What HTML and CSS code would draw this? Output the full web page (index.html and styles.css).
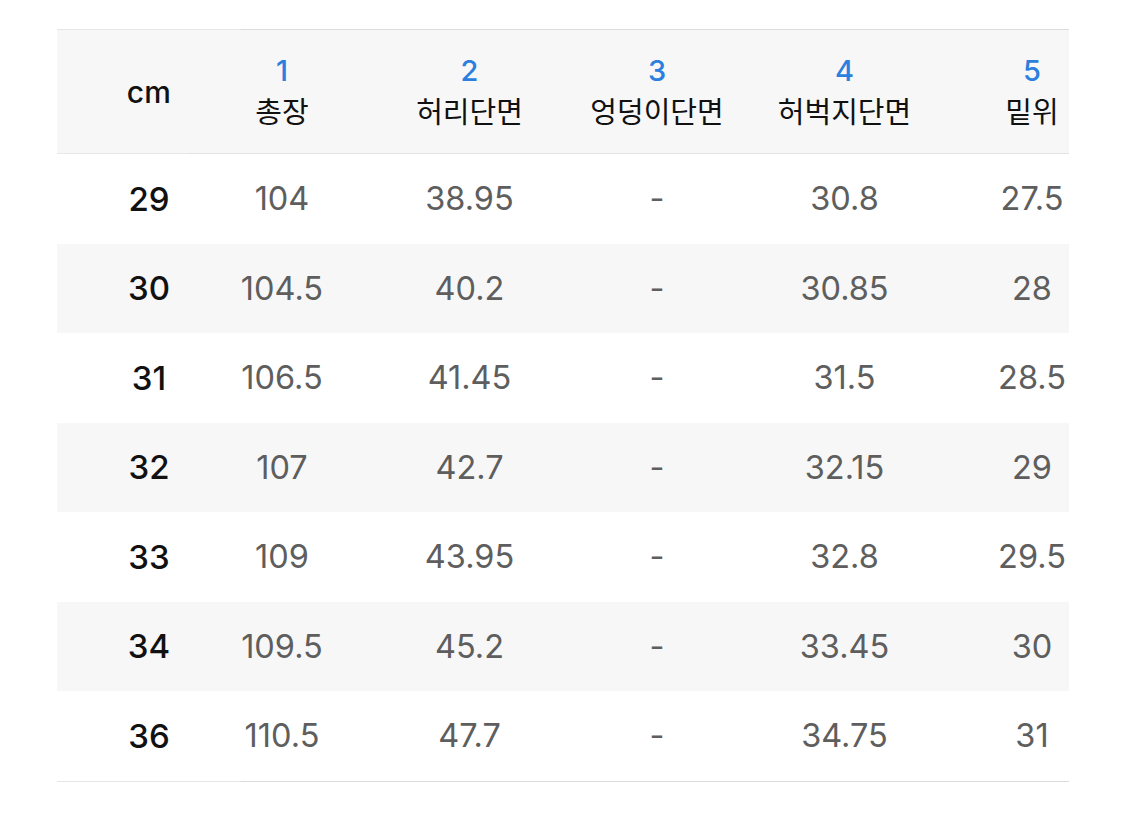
FILE: index.html
```html
<!DOCTYPE html>
<html lang="ko">
<head>
<meta charset="utf-8">
<link rel="stylesheet" href="styles.css">
</head>
<body>
<div class="table">
  <div class="fixed">
    <div class="head-cell"><span class="unit">cm</span></div>
    <div class="size-cell">29</div>
    <div class="size-cell alt">30</div>
    <div class="size-cell">31</div>
    <div class="size-cell alt">32</div>
    <div class="size-cell">33</div>
    <div class="size-cell alt">34</div>
    <div class="size-cell">36</div>
  </div>
  <div class="scroll">
    <div class="grid">
      <div class="head-row">
        <div class="head-cell"><span class="num">1</span><span class="label">총장</span></div>
        <div class="head-cell"><span class="num">2</span><span class="label">허리단면</span></div>
        <div class="head-cell"><span class="num">3</span><span class="label">엉덩이단면</span></div>
        <div class="head-cell"><span class="num">4</span><span class="label">허벅지단면</span></div>
        <div class="head-cell"><span class="num">5</span><span class="label">밑위</span></div>
      </div>
      <div class="row"><div class="cell">104</div><div class="cell">38.95</div><div class="cell">-</div><div class="cell">30.8</div><div class="cell">27.5</div></div>
      <div class="row alt"><div class="cell">104.5</div><div class="cell">40.2</div><div class="cell">-</div><div class="cell">30.85</div><div class="cell">28</div></div>
      <div class="row"><div class="cell">106.5</div><div class="cell">41.45</div><div class="cell">-</div><div class="cell">31.5</div><div class="cell">28.5</div></div>
      <div class="row alt"><div class="cell">107</div><div class="cell">42.7</div><div class="cell">-</div><div class="cell">32.15</div><div class="cell">29</div></div>
      <div class="row"><div class="cell">109</div><div class="cell">43.95</div><div class="cell">-</div><div class="cell">32.8</div><div class="cell">29.5</div></div>
      <div class="row alt"><div class="cell">109.5</div><div class="cell">45.2</div><div class="cell">-</div><div class="cell">33.45</div><div class="cell">30</div></div>
      <div class="row"><div class="cell">110.5</div><div class="cell">47.7</div><div class="cell">-</div><div class="cell">34.75</div><div class="cell">31</div></div>
    </div>
  </div>
</div>
</body>
</html>
```

FILE: styles.css
```css
html, body {
  margin: 0;
  padding: 0;
  background: #ffffff;
}

body {
  padding: 29px 0 0 57px;
  font-family: Inter, "Noto Sans CJK KR", sans-serif;
}

.table {
  width: 1012px;
  display: flex;
  overflow: hidden;
}

.fixed {
  flex: none;
  width: 184px;
  border-top: 1.5px solid #e6e6e6;
  border-bottom: 1.5px solid #e6e6e6;
}

.scroll {
  flex: 1;
  min-width: 0;
  border-top: 1.5px solid #dcdcdc;
  border-bottom: 1.5px solid #dcdcdc;
}

.grid {
  margin-left: -52.75px;
  width: 937.5px;
}

.head-row,
.row {
  display: grid;
  grid-template-columns: repeat(5, 187.5px);
}

.head-cell {
  height: 123px;
  background: #f7f7f7;
  border-bottom: 1.5px solid #e8e8e8;
  display: flex;
  flex-direction: column;
  align-items: center;
  justify-content: center;
  color: #111111;
  font-size: 29px;
  line-height: 42px;
}

.head-row .head-cell {
  border-bottom-color: #e3e3e3;
}

.unit {
  font-size: 30px;
  font-weight: 500;
  letter-spacing: 0.3px;
}

.num {
  color: #2b7fde;
  font-size: 29px;
  font-weight: 500;
}

.label {
  font-weight: 400;
}

.size-cell,
.cell {
  height: 89.5px;
  display: flex;
  align-items: center;
  justify-content: center;
}

.size-cell {
  color: #111111;
  font-size: 33px;
  font-weight: 500;
}

.cell {
  color: #5e5e5e;
  font-size: 32.5px;
  font-weight: 400;
}

.alt,
.row.alt .cell {
  background: #f7f7f7;
}
```
